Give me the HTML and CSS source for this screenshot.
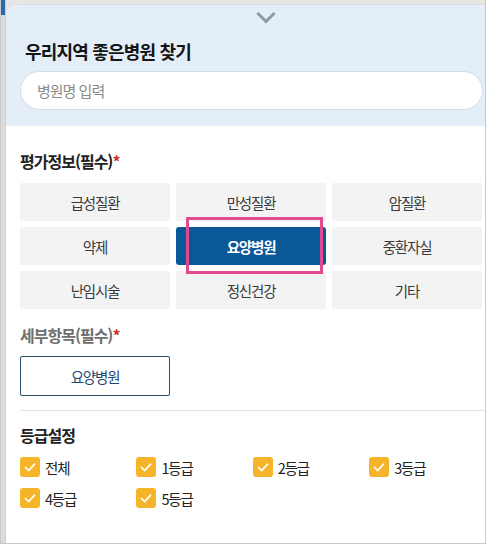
FILE: index.html
```html
<!DOCTYPE html>
<html lang="ko">
<head>
<meta charset="utf-8">
<title>우리지역 좋은병원 찾기</title>
<link rel="stylesheet" href="styles.css">
</head>
<body>
<div class="frame">
  <div class="map-strip"><span class="map-pin"></span></div>
  <div class="panel">
    <header class="panel-head">
      <div class="handle">
        <svg width="20" height="13" viewBox="0 0 20 13" aria-hidden="true"><polyline points="1.5,2 10,10.5 18.5,2" fill="none" stroke="#8f989f" stroke-width="3"/></svg>
      </div>
      <h1 class="title">우리지역 좋은병원 찾기</h1>
      <div class="search"><input class="search-input" type="text" placeholder="병원명 입력"></div>
    </header>

    <section class="sec sec-eval">
      <h2 class="sec-title">평가정보(필수)<span class="req">*</span></h2>
      <div class="cat-grid">
        <button class="cat">급성질환</button>
        <button class="cat">만성질환</button>
        <button class="cat">암질환</button>
        <button class="cat">약제</button>
        <button class="cat is-active">요양병원<span class="focus-ring"></span></button>
        <button class="cat">중환자실</button>
        <button class="cat">난임시술</button>
        <button class="cat">정신건강</button>
        <button class="cat">기타</button>
      </div>
    </section>

    <section class="sec sec-detail">
      <h2 class="sec-title muted">세부항목(필수)<span class="req">*</span></h2>
      <button class="detail-btn">요양병원</button>
    </section>

    <section class="sec sec-grade">
      <h2 class="sec-title">등급설정</h2>
      <div class="grade-grid">
        <label class="chk"><span class="box"><svg viewBox="0 0 20 20"><polyline points="5,10 8.7,13.6 15,6.6" fill="none" stroke="#fff" stroke-width="1.6"/></svg></span>전체</label>
        <label class="chk"><span class="box"><svg viewBox="0 0 20 20"><polyline points="5,10 8.7,13.6 15,6.6" fill="none" stroke="#fff" stroke-width="1.6"/></svg></span>1등급</label>
        <label class="chk"><span class="box"><svg viewBox="0 0 20 20"><polyline points="5,10 8.7,13.6 15,6.6" fill="none" stroke="#fff" stroke-width="1.6"/></svg></span>2등급</label>
        <label class="chk"><span class="box"><svg viewBox="0 0 20 20"><polyline points="5,10 8.7,13.6 15,6.6" fill="none" stroke="#fff" stroke-width="1.6"/></svg></span>3등급</label>
        <label class="chk"><span class="box"><svg viewBox="0 0 20 20"><polyline points="5,10 8.7,13.6 15,6.6" fill="none" stroke="#fff" stroke-width="1.6"/></svg></span>4등급</label>
        <label class="chk"><span class="box"><svg viewBox="0 0 20 20"><polyline points="5,10 8.7,13.6 15,6.6" fill="none" stroke="#fff" stroke-width="1.6"/></svg></span>5등급</label>
      </div>
    </section>
  </div>
</div>
</body>
</html>
```

FILE: styles.css
```css
* { box-sizing: border-box; }
html, body { margin: 0; padding: 0; }
body {
  font-family: "Noto Sans CJK KR", "Noto Sans", sans-serif;
  color: #333;
  background: #fff;
}
.frame {
  width: 486px;
  height: 544px;
  border: 1px solid #c9c9c9;
  border-top: 0;
  background: #e6e6e3;
  display: flex;
  overflow: hidden;
}
.map-strip {
  width: 5px;
  flex: none;
  border-right: 1px solid #cfcfcf;
  background: #dcdcdc;
}
.map-pin {
  display: block;
  height: 15px;
  background: #2b6aa8;
}
.panel {
  flex: 1;
  margin-top: 4px;
  background: #fff;
  border-top: 1px solid #d6dde3;
  border-top-left-radius: 12px;
  overflow: hidden;
}
.panel-head {
  background: #e3eef9;
  padding: 0 0 16px 14px;
}
.handle {
  display: flex;
  justify-content: center;
  padding: 6px 0 0 26px;
  height: 24px;
}
.handle svg { display: block; }
.title {
  margin: 9px 0 0 5px;
  font-size: 18px;
  line-height: 26px;
  font-weight: 700;
  color: #151515;
  letter-spacing: -0.8px;
}
.search { margin-top: 7px; }
.search-input {
  display: block;
  width: 463px;
  height: 39px;
  border: 1px solid #d5dbe0;
  border-radius: 20px;
  background: #fff;
  padding: 0 16px;
  font-family: inherit;
  font-size: 15px;
  letter-spacing: -1px;
  color: #333;
  outline: none;
}
.search-input::placeholder { color: #8a8a8a; }

.sec { padding-left: 14px; }
.sec-title {
  margin: 0;
  font-size: 16px;
  line-height: 22px;
  font-weight: 700;
  color: #222;
  letter-spacing: -1px;
}
.sec-title.muted { color: #6e6e6e; }
.req { color: #d0312d; }

.sec-eval { padding-top: 24px; }
.cat-grid {
  margin-top: 11px;
  display: grid;
  grid-template-columns: repeat(3, 150px);
  grid-auto-rows: 38px;
  gap: 6px;
}
.cat {
  position: relative;
  border: 0;
  border-radius: 2px;
  background: #f3f3f3;
  font-family: inherit;
  font-size: 14.5px;
  letter-spacing: -1.2px;
  color: #3a3a3a;
  padding: 0;
}
.cat.is-active {
  background: #0b5899;
  color: #fff;
  font-weight: 700;
  border-radius: 3px;
}
.focus-ring {
  position: absolute;
  z-index: 2;
  left: 10px;
  top: -10px;
  width: 137px;
  height: 57px;
  border: 3px solid #e2498f;
}

.sec-detail { padding-top: 15px; }
.detail-btn {
  display: block;
  margin-top: 10px;
  width: 150px;
  height: 40px;
  border: 1px solid #2c4e66;
  border-radius: 2px;
  background: #fff;
  font-family: inherit;
  font-size: 14.5px;
  letter-spacing: -1.2px;
  color: #1d4a72;
}

.sec-grade {
  margin: 14px 0 0 14px;
  padding: 13px 0 0 0;
  border-top: 1px solid #e3e3e3;
}
.grade-grid {
  margin-top: 11px;
  display: grid;
  grid-template-columns: repeat(4, 116.4px);
  grid-auto-rows: 20px;
  row-gap: 11px;
}
.chk {
  display: flex;
  align-items: center;
  gap: 5px;
  font-size: 14.5px;
  letter-spacing: -1.2px;
  color: #222;
}
.box {
  width: 20px;
  height: 20px;
  flex: none;
  border-radius: 3px;
  background: #f6b42b;
}
.box svg { display: block; width: 20px; height: 20px; }
```
